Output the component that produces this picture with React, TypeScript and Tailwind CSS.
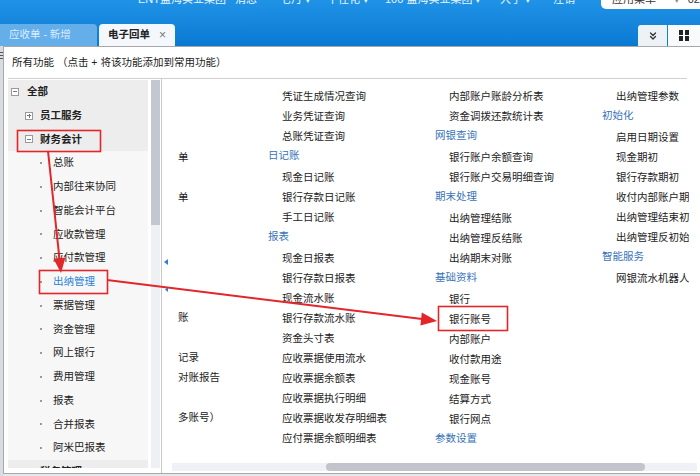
import React from 'react';
import { ChevronsDown } from 'lucide-react';

// tree on the left: lv 0 = root, 1 = group, 2 = leaf
const tree = [
  { t: '全部', lv: 0, open: true },
  { t: '员工服务', lv: 1, open: false },
  { t: '财务会计', lv: 1, open: true },
  { t: '总账', lv: 2 },
  { t: '内部往来协同', lv: 2 },
  { t: '智能会计平台', lv: 2 },
  { t: '应收款管理', lv: 2 },
  { t: '应付款管理', lv: 2 },
  { t: '出纳管理', lv: 2, active: true },
  { t: '票据管理', lv: 2 },
  { t: '资金管理', lv: 2 },
  { t: '网上银行', lv: 2 },
  { t: '费用管理', lv: 2 },
  { t: '报表', lv: 2 },
  { t: '合并报表', lv: 2 },
  { t: '阿米巴报表', lv: 2 },
  { t: '税务管理', lv: 1, open: false },
];

// '#' marks a group title
const columns: string[][] = [
  [
    '收款单', '付款单', '#日常处理', '银行存款转账单', '应收票据', '应收票据结算单', '转账单',
    '票据背书', '票据贴现', '票据退票', '票据托收', '银行存款日记账', '对账单',
    '银行对账处理记录', '银行存款余额对账报告', '调节表', '余额调节表（多账号）',
  ],
  [
    '凭证生成情况查询', '业务凭证查询', '总账凭证查询', '#日记账', '现金日记账', '银行存款日记账',
    '手工日记账', '#报表', '现金日报表', '银行存款日报表', '现金流水账', '银行存款流水账',
    '资金头寸表', '应收票据使用流水', '应收票据余额表', '应收票据执行明细', '应收票据收发存明细表',
    '应付票据余额明细表',
  ],
  [
    '内部账户账龄分析表', '资金调拨还款统计表', '#网银查询', '银行账户余额查询', '银行账户交易明细查询',
    '#期末处理', '出纳管理结账', '出纳管理反结账', '出纳期末对账', '#基础资料', '银行', '银行账号',
    '内部账户', '收付款用途', '现金账号', '结算方式', '银行网点', '#参数设置',
  ],
  [
    '出纳管理参数', '#初始化', '启用日期设置', '现金期初', '银行存款期初', '收付内部账户期初',
    '出纳管理结束初始化', '出纳管理反初始化', '#智能服务', '网银流水机器人',
  ],
];

const TreeBox = ({ open }: { open?: boolean }) => (
  <span className="relative w-[8px] h-[8px] border border-[#9a9a9a] bg-white shrink-0">
    <span className="absolute left-[1px] top-[2.5px] w-[4px] h-px bg-[#777]" />
    {!open && <span className="absolute left-[2.5px] top-[1px] w-px h-[4px] bg-[#777]" />}
  </span>
);

const TopNav = () => (
  <div className="h-[24px] flex items-start">
    <div className="flex-1 flex -mt-[8px] text-[11px] leading-[14px] text-[#eaf4fd] whitespace-nowrap">
      <span className="w-[138px]" />
      <span className="w-[97px]">ENT盘海实业集团</span>
      <span className="w-[45px]">消息</span>
      <span className="w-[47px]">七月 ▾</span>
      <span className="w-[58px]">千任化 ▾</span>
      <span className="w-[115px]">100 盘海实业集团 ▾</span>
      <span className="w-[53px]">大于 ▾</span>
      <span>注销</span>
    </div>
    <div className="w-[99px] h-[9px] bg-white rounded-bl-[5px] overflow-hidden">
      <div className="flex -mt-[8px] text-[11px] leading-[14px] text-[#333] whitespace-nowrap">
        <span className="ml-[11px] w-[64px]">应用菜单</span>
        <span className="w-[14px] text-[#888]">▾</span>
        <span>02</span>
      </div>
    </div>
  </div>
);

const Tabs = () => (
  <div className="h-[22px] flex items-end">
    <div className="w-[97px] h-[22px] bg-[#64aeea] rounded-tr-[4px] pl-[9px] flex items-center text-[#dcedfb]">
      应收单 - 新增
    </div>
    <div className="ml-[2px] w-[76px] h-[22px] bg-[#f4f8fc] rounded-t-[4px] pl-[9px] flex items-center">
      <span className="font-bold text-[#222]">电子回单</span>
      <span className="ml-[9px] text-[12px] text-[#777]">×</span>
    </div>
    <div className="flex-1" />
    <div className="w-[29px] h-[21px] bg-[#edf2f7] rounded-tl-[3px] flex items-center justify-center">
      <ChevronsDown size={12} strokeWidth={2.6} className="text-[#333]" />
    </div>
    <div className="ml-px w-[32px] h-[21px] bg-[#f8fafc] flex items-center justify-center">
      <div className="grid grid-cols-2 gap-[1.5px]">
        <span className="w-[4.5px] h-[4.5px] bg-[#222]" />
        <span className="w-[4.5px] h-[4.5px] bg-[#222]" />
        <span className="w-[4.5px] h-[4.5px] bg-[#222]" />
        <span className="w-[4.5px] h-[4.5px] bg-[#222]" />
      </div>
    </div>
  </div>
);

const Tree = () => (
  <div className="ml-[4px] mt-px w-[140px] h-[388px] overflow-hidden shrink-0">
    {tree.map((n) => (
      <div
        key={n.t}
        className={
          'h-[23.75px] flex items-center whitespace-nowrap ' +
          (n.lv === 2 ? 'bg-[#f7f7f7]' : 'bg-[#ededed]')
        }
      >
        {n.lv === 0 && (
          <>
            <span className="ml-[3px]" />
            <TreeBox open={n.open} />
            <span className="ml-[8px] font-bold text-[#222]">{n.t}</span>
          </>
        )}
        {n.lv === 1 && (
          <>
            <span className="ml-[17px]" />
            <TreeBox open={n.open} />
            <span className="ml-[7px] font-bold text-[#222]">{n.t}</span>
          </>
        )}
        {n.lv === 2 && (
          <>
            <span className="ml-[32px] w-[2px] h-[2px] bg-[#9a9a9a]" />
            <span className={'ml-[11px] ' + (n.active ? 'text-[#1f82da]' : 'text-[#222]')}>{n.t}</span>
          </>
        )}
      </div>
    ))}
  </div>
);

const MenuPane = () => (
  <div className="ml-px flex-1 min-w-0 border-l border-[#c9c9c9] flex flex-col">
    {/* scroll viewport starts a little right of the splitter */}
    <div className="h-[384px] ml-[16px] mr-[11px] pt-[7px] overflow-hidden">
      <div className="-ml-[77px] flex text-[#222] whitespace-nowrap">
        {columns.map((col, i) => (
          <div key={i} className="w-[167px] shrink-0">
            {col.map((s, j) =>
              s.startsWith('#') ? (
                <div key={j} className="h-[21px] leading-[19px] text-[#3672b9]">
                  {s.slice(1)}
                </div>
              ) : (
                <div key={j} className="h-[20px] leading-[20px] pl-[14px]">
                  {s}
                </div>
              )
            )}
          </div>
        ))}
      </div>
    </div>
    <div className="ml-[10px] mr-[3px] h-[8px] bg-[#eef1f6] flex">
      <div className="ml-[154px] w-[319px] h-full rounded-[4px] bg-[#c1c4cb]" />
    </div>
  </div>
);

const Marks = () => (
  <svg className="absolute left-0 top-0 pointer-events-none" width={700} height={476}>
    <polygon points="168,259 164,262 168,265" fill="#2f7de1" />
    <polygon points="168,287 165,289.5 168,292" fill="#2f7de1" />
    <g fill="none" stroke="#e3262a" strokeWidth={1.6}>
      <rect x={17.5} y={130.5} width={83} height={21} />
      <rect x={39.5} y={270.5} width={68} height={23} />
      <rect x={438.5} y={306.5} width={69} height={24} />
    </g>
    <g stroke="#e3262a" strokeWidth={2}>
      <line x1={48} y1={151} x2={59.6} y2={260} />
      <line x1={107} y1={280} x2={422} y2={319} />
    </g>
    <g fill="#e3262a">
      <polygon points="61,273 65.5,257.5 53.5,258.8" />
      <polygon points="437,321 420.4,325.5 421.8,312.6" />
    </g>
  </svg>
);

export default function App() {
  return (
    <div className="relative w-[700px] h-[476px] overflow-hidden bg-[#e4e7eb] text-[10.5px] font-['Liberation_Sans','Noto_Sans_CJK_SC',sans-serif]">
      <div className="h-[46px] bg-gradient-to-b from-[#1f93e7] to-[#0a79d2] flex flex-col">
        <TopNav />
        <Tabs />
      </div>
      <div className="flex h-[430px]">
        <div className="w-[3px] shrink-0 bg-[#d9dde2] pt-[6px]">
          <div className="h-[1px] w-[3px] bg-[#555] mb-[2px]" />
          <div className="h-[1px] w-[3px] bg-[#555] mb-[2px]" />
          <div className="h-[1px] w-[3px] bg-[#555]" />
        </div>
        <div className="flex-1 min-w-0 h-[428px] bg-white border-l border-t border-b border-[#a8a8a8] flex flex-col">
          <div className="ml-[4px] mr-[13px] h-[32px] border-b border-[#cfcfcf] pl-[4px] flex items-center text-[#222] whitespace-nowrap">
            所有功能 （点击 + 将该功能添加到常用功能）
          </div>
          <div className="flex h-[394px]">
            <Tree />
            <div className="ml-[3px] mt-px w-[9px] shrink-0 h-[388px] bg-[#eef0f4]">
              <div className="h-[145px] bg-[#c3c8d0]" />
            </div>
            <MenuPane />
          </div>
        </div>
      </div>
      <Marks />
    </div>
  );
}
